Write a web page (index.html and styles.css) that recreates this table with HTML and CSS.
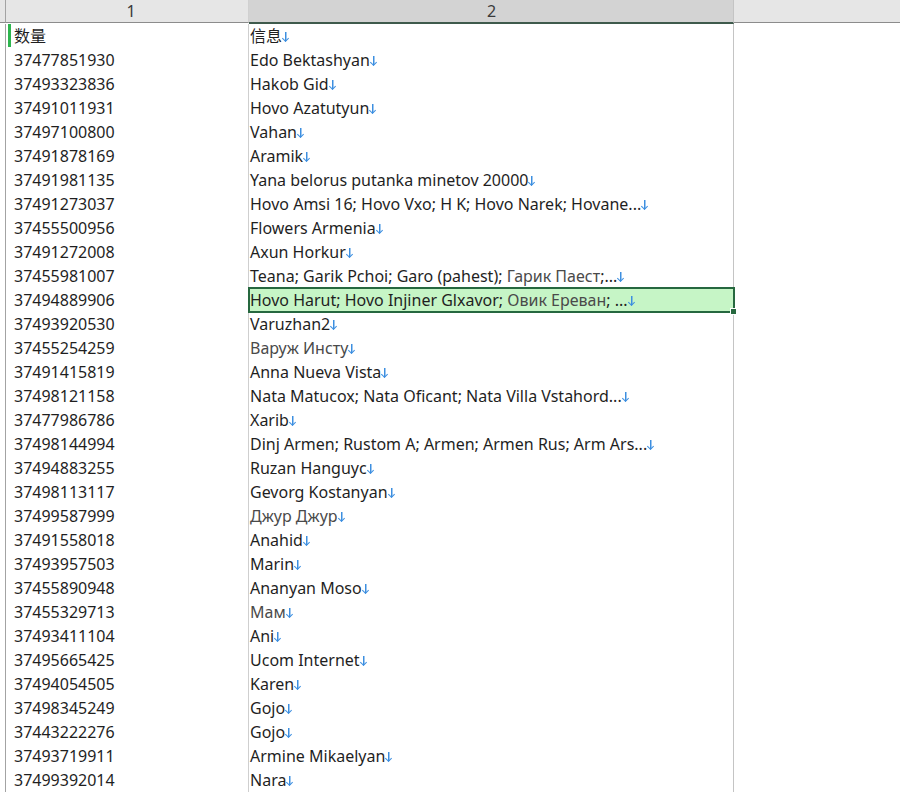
FILE: index.html
```html
<!DOCTYPE html>
<html>
<head>
<meta charset="utf-8">
<link rel="stylesheet" href="styles.css">
</head>
<body>
<div class="sheet">
  <div class="row head">
    <div class="gutter"></div>
    <div class="h c1">1</div>
    <div class="h c2 sel-col">2</div>
    <div class="h c3"></div>
  </div>
  <div class="row"><div class="gutter"></div><div class="c c1 flag">数量</div><div class="c c2">信息<i class="lf"></i></div><div class="c c3"></div></div>
  <div class="row"><div class="gutter"></div><div class="c c1">37477851930</div><div class="c c2">Edo Bektashyan<i class="lf"></i></div><div class="c c3"></div></div>
  <div class="row"><div class="gutter"></div><div class="c c1">37493323836</div><div class="c c2">Hakob Gid<i class="lf"></i></div><div class="c c3"></div></div>
  <div class="row"><div class="gutter"></div><div class="c c1">37491011931</div><div class="c c2">Hovo Azatutyun<i class="lf"></i></div><div class="c c3"></div></div>
  <div class="row"><div class="gutter"></div><div class="c c1">37497100800</div><div class="c c2">Vahan<i class="lf"></i></div><div class="c c3"></div></div>
  <div class="row"><div class="gutter"></div><div class="c c1">37491878169</div><div class="c c2">Aramik<i class="lf"></i></div><div class="c c3"></div></div>
  <div class="row"><div class="gutter"></div><div class="c c1">37491981135</div><div class="c c2">Yana belorus putanka minetov 20000<i class="lf"></i></div><div class="c c3"></div></div>
  <div class="row"><div class="gutter"></div><div class="c c1">37491273037</div><div class="c c2">Hovo Amsi 16; Hovo Vxo; H K; Hovo Narek; Hovane...<i class="lf"></i></div><div class="c c3"></div></div>
  <div class="row"><div class="gutter"></div><div class="c c1">37455500956</div><div class="c c2">Flowers Armenia<i class="lf"></i></div><div class="c c3"></div></div>
  <div class="row"><div class="gutter"></div><div class="c c1">37491272008</div><div class="c c2">Axun Horkur<i class="lf"></i></div><div class="c c3"></div></div>
  <div class="row"><div class="gutter"></div><div class="c c1">37455981007</div><div class="c c2">Teana; Garik Pchoi; Garo (pahest); <span class="cy">Гарик Паест</span>;...<i class="lf"></i></div><div class="c c3"></div></div>
  <div class="row"><div class="gutter"></div><div class="c c1">37494889906</div><div class="c c2 active">Hovo Harut; Hovo Injiner Glxavor; <span class="cy">Овик Ереван</span>; ...<i class="lf"></i><b class="handle"></b></div><div class="c c3"></div></div>
  <div class="row"><div class="gutter"></div><div class="c c1">37493920530</div><div class="c c2">Varuzhan2<i class="lf"></i></div><div class="c c3"></div></div>
  <div class="row"><div class="gutter"></div><div class="c c1">37455254259</div><div class="c c2"><span class="cy">Варуж Инсту</span><i class="lf"></i></div><div class="c c3"></div></div>
  <div class="row"><div class="gutter"></div><div class="c c1">37491415819</div><div class="c c2">Anna Nueva Vista<i class="lf"></i></div><div class="c c3"></div></div>
  <div class="row"><div class="gutter"></div><div class="c c1">37498121158</div><div class="c c2">Nata Matucox; Nata Oficant; Nata Villa Vstahord...<i class="lf"></i></div><div class="c c3"></div></div>
  <div class="row"><div class="gutter"></div><div class="c c1">37477986786</div><div class="c c2">Xarib<i class="lf"></i></div><div class="c c3"></div></div>
  <div class="row"><div class="gutter"></div><div class="c c1">37498144994</div><div class="c c2">Dinj Armen; Rustom A; Armen; Armen Rus; Arm Ars...<i class="lf"></i></div><div class="c c3"></div></div>
  <div class="row"><div class="gutter"></div><div class="c c1">37494883255</div><div class="c c2">Ruzan Hanguyc<i class="lf"></i></div><div class="c c3"></div></div>
  <div class="row"><div class="gutter"></div><div class="c c1">37498113117</div><div class="c c2">Gevorg Kostanyan<i class="lf"></i></div><div class="c c3"></div></div>
  <div class="row"><div class="gutter"></div><div class="c c1">37499587999</div><div class="c c2"><span class="cy">Джур Джур</span><i class="lf"></i></div><div class="c c3"></div></div>
  <div class="row"><div class="gutter"></div><div class="c c1">37491558018</div><div class="c c2">Anahid<i class="lf"></i></div><div class="c c3"></div></div>
  <div class="row"><div class="gutter"></div><div class="c c1">37493957503</div><div class="c c2">Marin<i class="lf"></i></div><div class="c c3"></div></div>
  <div class="row"><div class="gutter"></div><div class="c c1">37455890948</div><div class="c c2">Ananyan Moso<i class="lf"></i></div><div class="c c3"></div></div>
  <div class="row"><div class="gutter"></div><div class="c c1">37455329713</div><div class="c c2"><span class="cy">Мам</span><i class="lf"></i></div><div class="c c3"></div></div>
  <div class="row"><div class="gutter"></div><div class="c c1">37493411104</div><div class="c c2">Ani<i class="lf"></i></div><div class="c c3"></div></div>
  <div class="row"><div class="gutter"></div><div class="c c1">37495665425</div><div class="c c2">Ucom Internet<i class="lf"></i></div><div class="c c3"></div></div>
  <div class="row"><div class="gutter"></div><div class="c c1">37494054505</div><div class="c c2">Karen<i class="lf"></i></div><div class="c c3"></div></div>
  <div class="row"><div class="gutter"></div><div class="c c1">37498345249</div><div class="c c2">Gojo<i class="lf"></i></div><div class="c c3"></div></div>
  <div class="row"><div class="gutter"></div><div class="c c1">37443222276</div><div class="c c2">Gojo<i class="lf"></i></div><div class="c c3"></div></div>
  <div class="row"><div class="gutter"></div><div class="c c1">37493719911</div><div class="c c2">Armine Mikaelyan<i class="lf"></i></div><div class="c c3"></div></div>
  <div class="row"><div class="gutter"></div><div class="c c1">37499392014</div><div class="c c2">Nara<i class="lf"></i></div><div class="c c3"></div></div>
</div>
</body>
</html>
```

FILE: styles.css
```css
html, body {
  margin: 0;
  padding: 0;
  background: #ffffff;
  overflow: hidden;
}
.sheet {
  width: 900px;
  height: 795px;
  overflow: hidden;
  font-family: "Noto Sans", "Noto Sans CJK SC", sans-serif;
  font-size: 16px;
  color: #1f1f1f;
}
.row {
  display: grid;
  grid-template-columns: 6px 243px 485px 1fr;
  height: 24px;
}
.gutter {
  border-right: 1px solid #a3a3a3;
  background: #ffffff;
}
.head .gutter {
  background: #e6e6e6;
  border-bottom: 1px solid #8c8c8c;
  height: 22px;
}
.h {
  height: 22px;
  line-height: 22px;
  text-align: center;
  background: #e6e6e6;
  border-bottom: 1px solid #8c8c8c;
  color: #3a3a3a;
  font-family: "Noto Sans", sans-serif;
  font-size: 16px;
}
.h.c1 {
  border-right: 1px solid #d0d0d0;
}
.h.c2.sel-col {
  background: #d3d3d3;
  border-bottom: 2px solid #3e5a4c;
  border-right: 1px solid #c4c4c4;
}
.c {
  line-height: 24px;
  white-space: nowrap;
  overflow: hidden;
}
.c1 {
  padding-left: 8px;
  border-right: 1px solid #cfcfcf;
}
.c2 {
  padding-left: 1px;
  border-right: 1px solid #c4c4c4;
}
.flag {
  position: relative;
}
.flag::before {
  content: "";
  position: absolute;
  left: 2px;
  top: 0;
  width: 3px;
  height: 23px;
  background: #2eb54e;
}
.cy {
  color: #4a4a4a;
}
.lf {
  display: inline-block;
  width: 8px;
  height: 11px;
  margin-left: 0;
  vertical-align: -1px;
  background:
    linear-gradient(#3d8fe0, #3d8fe0) 3px 0 / 1.5px 9px no-repeat;
  position: relative;
}
.lf::after {
  content: "";
  position: absolute;
  left: 1px;
  top: 4px;
  width: 4px;
  height: 4px;
  border-right: 1.5px solid #3d8fe0;
  border-bottom: 1.5px solid #3d8fe0;
  transform: rotate(45deg);
}
.active {
  position: relative;
  overflow: visible;
  background: #c6f5c6;
  outline: 2px solid #26683f;
  outline-offset: -1px;
  z-index: 2;
}
.handle {
  position: absolute;
  right: -4px;
  bottom: -3px;
  width: 5px;
  height: 5px;
  background: #26683f;
  border: 1px solid #ffffff;
}
```
